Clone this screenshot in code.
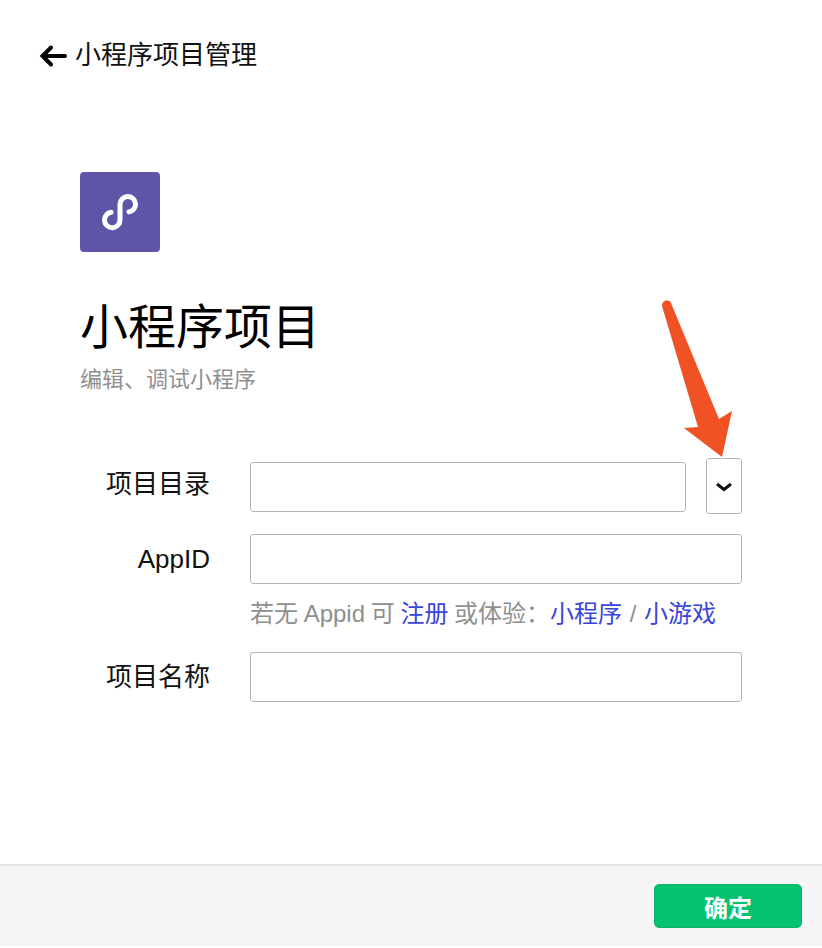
<template>
  <div class="page">
    <header class="top">
      <svg class="back" width="28" height="24" viewBox="0 0 28 24">
        <path d="M26 12H3.500M12 3.500L3.500 12l8.500 8.500" fill="none" stroke="#000" stroke-width="4" stroke-linecap="round" stroke-linejoin="miter" />
      </svg>
      <span class="top-title">小程序项目管理</span>
    </header>

    <main class="main">
      <div class="logo">
        <svg width="40" height="40" viewBox="0 0 40 40">
          <path d="M11 20.300A7.750 7.750 0 1 0 20 27.750V12.250A7.750 7.750 0 1 1 29 19.900" fill="none" stroke="#fff" stroke-width="5" stroke-linecap="round" />
        </svg>
      </div>
      <h1 class="title">小程序项目</h1>
      <p class="sub">编辑、调试小程序</p>

      <div class="form">
        <div class="row first">
          <label class="label lift">项目目录</label>
          <div class="input grow nudge"></div>
          <button class="drop">
            <svg class="chev" width="18" height="10" viewBox="0 0 18 10">
              <path d="M2 2l7 5.500L16 2" fill="none" stroke="#111" stroke-width="3" />
            </svg>
          </button>
        </div>
        <div class="row">
          <label class="label">AppID</label>
          <div class="input grow"></div>
        </div>
        <div class="hint">若无 Appid 可 <a class="link">注册</a> 或体验：<a class="link">小程序</a><span class="sep"> / </span><a class="link">小游戏</a></div>
        <div class="row">
          <label class="label">项目名称</label>
          <div class="input grow"></div>
        </div>
      </div>
    </main>

    <footer class="foot">
      <button class="ok">确定</button>
    </footer>

    <svg class="arrow" width="90" height="170" viewBox="0 0 90 170">
      <path d="M2 10C2 4 9 3 11 7L59 123 72 115 62 161 24 132 38 131Z" fill="#f05226" />
    </svg>
  </div>
</template>

<style>
body { margin: 0; background: #fff; }
</style>

<style scoped>
.page {
  position: relative;
  width: 822px;
  height: 948px;
  display: flex;
  flex-direction: column;
  background: #fff;
  color: #000;
  overflow: hidden;
  font-family: "Liberation Sans", "Noto Sans CJK SC", sans-serif;
}
.top {
  height: 110px;
  box-sizing: border-box;
  padding: 2px 0 0 39px;
  display: flex;
  align-items: center;
  gap: 8px;
}
.back { flex: none; }
.top-title { font-size: 26px; line-height: 1; color: #111; margin-top: -2px; }
.main {
  flex: 1;
  padding: 62px 80px 0;
}
.logo {
  width: 80px;
  height: 80px;
  border-radius: 4px;
  background: #5f55a8;
  display: flex;
  align-items: center;
  justify-content: center;
}
.title {
  margin: 48px 0 0;
  font-size: 48px;
  line-height: 56px;
  font-weight: 400;
}
.sub {
  margin: 9px 0 0;
  font-size: 22px;
  line-height: 30px;
  color: #8f8f8f;
}
.form {
  margin: 63px 0 0 -80px;
  display: flex;
  flex-direction: column;
  width: 742px;
}
.row {
  display: flex;
  align-items: center;
}
.row.first {
  height: 56px;
  margin-bottom: 20px;
}
.label {
  width: 210px;
  flex: none;
  text-align: right;
  font-size: 26px;
  line-height: 50px;
  margin-right: 40px;
  color: #111;
}
.lift { margin-bottom: 4px; }
.input {
  height: 50px;
  box-sizing: border-box;
  border: 1px solid #b4b4b4;
  border-radius: 3px;
  background: #fff;
}
.nudge { margin-top: 2px; }
.grow { flex: 1; }
.drop {
  width: 36px;
  height: 56px;
  margin-left: 20px;
  padding: 0;
  box-sizing: border-box;
  border: 1px solid #b4b4b4;
  border-radius: 3px;
  background: #fff;
  display: flex;
  align-items: center;
  justify-content: center;
}
.chev { margin-top: 2px; }
.hint {
  margin: 13px 0 21px 250px;
  font-size: 24px;
  line-height: 34px;
  white-space: nowrap;
  word-spacing: -1px;
  color: #8f8f8f;
}
.sep { word-spacing: 1px; }
.link { color: #3a45d8; }
.foot {
  height: 82px;
  margin-bottom: 2px;
  box-sizing: border-box;
  border-top: 2px solid #e4e4e4;
  background: #f5f5f5;
  padding: 18px 20px 0 0;
  display: flex;
  justify-content: flex-end;
  align-items: flex-start;
}
.ok {
  width: 148px;
  height: 44px;
  border: 1px solid #0fb26c;
  border-radius: 5px;
  background: #05c271;
  color: #fff;
  font-family: inherit;
  font-size: 24px;
  font-weight: 700;
  padding: 0;
}
.arrow {
  position: absolute;
  left: 660px;
  top: 296px;
}
</style>
